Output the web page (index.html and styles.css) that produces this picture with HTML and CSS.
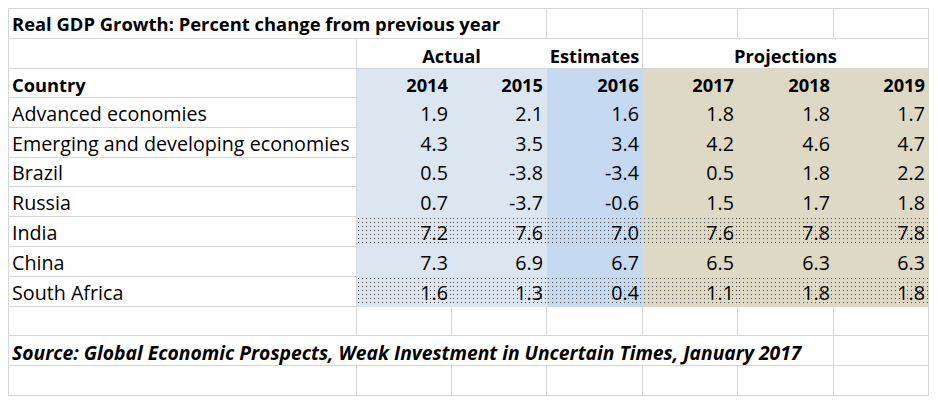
FILE: index.html
```html
<!DOCTYPE html>
<html>
<head>
<meta charset="utf-8">
<link rel="stylesheet" href="styles.css">
</head>
<body>
<div class="sheet">
  <!-- row 1 -->
  <div class="c title span3">Real GDP Growth: Percent change from previous year</div>
  <div class="c"></div><div class="c"></div><div class="c"></div><div class="c"></div>
  <!-- row 2 -->
  <div class="c"></div>
  <div class="c hdr span2 noright">Actual</div>
  <div class="c hdr">Estimates</div>
  <div class="c hdr span3">Projections</div>
  <!-- row 3 -->
  <div class="c b">Country</div>
  <div class="c n b lb">2014</div><div class="c n b lb">2015</div><div class="c n b mb">2016</div>
  <div class="c n b tan">2017</div><div class="c n b tan">2018</div><div class="c n b tan">2019</div>
  <!-- data -->
  <div class="c">Advanced economies</div>
  <div class="c n lb">1.9</div><div class="c n lb">2.1</div><div class="c n mb">1.6</div>
  <div class="c n tan">1.8</div><div class="c n tan">1.8</div><div class="c n tan">1.7</div>

  <div class="c">Emerging and developing economies</div>
  <div class="c n lb">4.3</div><div class="c n lb">3.5</div><div class="c n mb">3.4</div>
  <div class="c n tan">4.2</div><div class="c n tan">4.6</div><div class="c n tan">4.7</div>

  <div class="c">Brazil</div>
  <div class="c n lb">0.5</div><div class="c n lb">-3.8</div><div class="c n mb">-3.4</div>
  <div class="c n tan">0.5</div><div class="c n tan">1.8</div><div class="c n tan">2.2</div>

  <div class="c">Russia</div>
  <div class="c n lb">0.7</div><div class="c n lb">-3.7</div><div class="c n mb">-0.6</div>
  <div class="c n tan">1.5</div><div class="c n tan">1.7</div><div class="c n tan">1.8</div>

  <div class="c">India</div>
  <div class="c n lb dots">7.2</div><div class="c n lb dots">7.6</div><div class="c n mb dots">7.0</div>
  <div class="c n tan dots">7.6</div><div class="c n tan dots">7.8</div><div class="c n tan dots">7.8</div>

  <div class="c">China</div>
  <div class="c n lb">7.3</div><div class="c n lb">6.9</div><div class="c n mb">6.7</div>
  <div class="c n tan">6.5</div><div class="c n tan">6.3</div><div class="c n tan">6.3</div>

  <div class="c">South Africa</div>
  <div class="c n lb dots">1.6</div><div class="c n lb dots">1.3</div><div class="c n mb dots">0.4</div>
  <div class="c n tan dots">1.1</div><div class="c n tan dots">1.8</div><div class="c n tan dots">1.8</div>
  <!-- blank -->
  <div class="c"></div><div class="c"></div><div class="c"></div><div class="c"></div>
  <div class="c"></div><div class="c"></div><div class="c"></div>
  <!-- source -->
  <div class="c src span6">Source: Global Economic Prospects, Weak Investment in Uncertain Times, January 2017</div>
  <div class="c"></div>
  <!-- blank -->
  <div class="c"></div><div class="c"></div><div class="c"></div><div class="c"></div>
  <div class="c"></div><div class="c"></div><div class="c"></div>
</div>
</body>
</html>
```

FILE: styles.css
```css
html, body {
  margin: 0;
  padding: 0;
  background: #ffffff;
}
body {
  padding: 8px;
  font-family: "Open Sans", Lato, sans-serif;
  font-size: 19.7px;
  color: #000;
}
.sheet {
  display: grid;
  grid-template-columns: 348px 95px 95px 96px 95px 96px 95px;
  grid-template-rows: 30px 30px 29px 30px 30px 29px 30px 30px 30px 30px 29px 30px 30px;
  border-top: 1px solid #d4d7d6;
  border-left: 1px solid #d4d7d6;
  width: max-content;
}
.c {
  border-right: 1px solid #d4d7d6;
  border-bottom: 1px solid #d4d7d6;
  display: flex;
  align-items: flex-end;
  padding: 0 3px 1px 3px;
  white-space: nowrap;
  line-height: 1.2;
  box-sizing: border-box;
  min-width: 0;
}
.span2 { grid-column: span 2; }
.span3 { grid-column: span 3; }
.span6 { grid-column: span 6; }
.noright { border-right-color: #fff; }
.b { font-weight: 700; font-size: 18.3px; }
.title { font-weight: 700; font-size: 18.4px; padding-bottom: 3px; }
.hdr { font-weight: 700; font-size: 18.3px; justify-content: center; }
.n { justify-content: flex-end; }
.src { font-weight: 700; font-style: italic; font-size: 19.3px; }
.lb { background-color: #dce6f1; border-color: #dce6f1; }
.mb { background-color: #c5d9f1; border-color: #c5d9f1; }
.tan { background-color: #ddd9c4; border-color: #ddd9c4; }
.dots {
  background-image: conic-gradient(from 0deg at 1px 1px, transparent 75%, #4a4a4a 0);
  background-size: 4px 4px;
  background-position: 1px 1px;
}
```
